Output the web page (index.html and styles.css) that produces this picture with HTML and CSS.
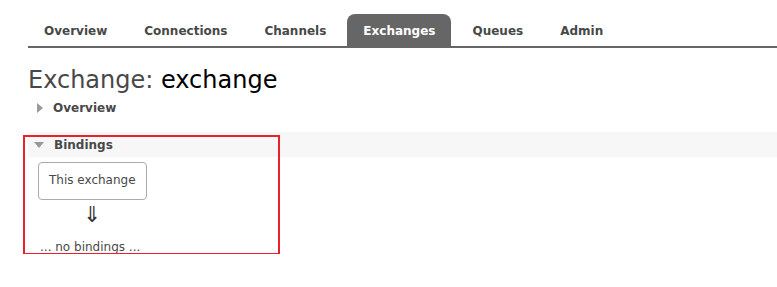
FILE: index.html
```html
<!DOCTYPE html>
<html lang="en">
<head>
  <meta charset="UTF-8" />
  <title>Exchange: exchange</title>
  <link rel="stylesheet" href="styles.css">
</head>
<body>

  <div id="page">
    <ul class="tabs">
      <li><a href="#">Overview</a></li>
      <li><a href="#">Connections</a></li>
      <li><a href="#">Channels</a></li>
      <li class="selected"><a href="#">Exchanges</a></li>
      <li><a href="#">Queues</a></li>
      <li><a href="#">Admin</a></li>
    </ul>

    <h1>Exchange: <b>exchange</b></h1>

    <div class="section closed">
      <h2><span class="tri"></span>Overview</h2>
    </div>

    <div class="section open">
      <h2><span class="tri"></span>Bindings</h2>
      <div class="hider">
        <div class="bindings-wrapper">
          <span class="exchange-box">This exchange</span>
          <span class="arrow">&dArr;</span>
        </div>
        <p class="none">... no bindings ...</p>
      </div>
      <div class="highlight"></div>
    </div>
  </div>

</body>
</html>
```

FILE: styles.css
```css
body {
  margin: 0;
  padding: 0;
  font-family: "DejaVu Sans", Verdana, sans-serif;
  font-size: 12px;
  color: #484848;
  background: #fff;
}

#page {
  padding-left: 28px;
}

.tabs {
  list-style: none;
  margin: 14px 0 0 0;
  padding: 0;
  display: flex;
  gap: 5px;
  border-bottom: 2px solid #666;
  height: 32px;
}

.tabs li {
  display: flex;
}

.tabs a {
  display: flex;
  align-items: center;
  padding: 2px 16px 0 16px;
  border-radius: 8px 8px 0 0;
  font-weight: bold;
  font-size: 12px;
  color: #484848;
  text-decoration: none;
}

.tabs .selected a {
  background: #666;
  color: #fff;
}

h1 {
  margin: 18px 0 0 0;
  font-size: 24px;
  line-height: 28px;
  font-weight: normal;
  color: #484848;
}

h1 b {
  font-weight: normal;
  color: #000;
}

.section {
  position: relative;
}

.section h2 {
  margin: 0;
  font-size: 12px;
  font-weight: bold;
  line-height: 24px;
  display: flex;
  align-items: center;
  color: #484848;
}

.closed h2 {
  padding-left: 9px;
  margin-top: 2px;
}

.closed .tri {
  width: 0;
  height: 0;
  border-top: 5px solid transparent;
  border-bottom: 5px solid transparent;
  border-left: 6px solid #999;
  margin-right: 10px;
}

.open {
  margin-top: 12px;
}

.open h2 {
  background: #f7f7f7;
  padding-left: 6px;
  height: 25px;
}

.open .tri {
  width: 0;
  height: 0;
  border-left: 5px solid transparent;
  border-right: 5px solid transparent;
  border-top: 6px solid #999;
  margin-right: 10px;
  margin-top: 1px;
}

.hider {
  padding: 5px 0 0 10px;
}

.bindings-wrapper {
  display: inline-flex;
  flex-direction: column;
  align-items: center;
}

.exchange-box {
  border: 1px solid #aaa;
  border-radius: 4px;
  padding: 11px 10px 12px 10px;
  line-height: 13px;
}

.arrow {
  font-size: 22px;
  line-height: 30px;
  color: #333;
}

.none {
  margin: 10px 0 0 2px;
}

.highlight {
  position: absolute;
  left: -5px;
  top: 3px;
  width: 253px;
  height: 116px;
  border: 2px solid #e8212b;
}
```
